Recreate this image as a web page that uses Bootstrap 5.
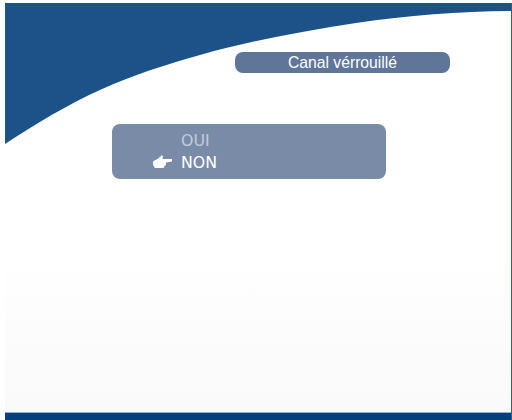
<!DOCTYPE html>
<html lang="fr">
<head>
<meta charset="utf-8">
<link href="https://cdn.jsdelivr.net/npm/bootstrap@5.3.0/dist/css/bootstrap.min.css" rel="stylesheet">
<style>
html, body { width: 512px; height: 420px; margin: 0; overflow: hidden; background: #fff; }
.tv-frame { width: 512px; height: 420px; padding: 3px 0 0 5px; }
.tv-screen { width: 507px; height: 417px; background: linear-gradient(#fff 60%, #f9f9f9 100%); border-right: 1px solid #2f5f8f; }
.tv-swoosh { left: 0; top: 0; width: 506px; height: 144px; }
.tv-body { flex: 1 1 auto; min-height: 0; }
.tv-bottom { height: 8px; background: #03407c; border-top: 1px solid #8fb0d0; }
.tv-title-row { padding: 49px 61px 0 230px; }
.tv-title { height: 21px; background: #5f7699; border-radius: 8px; color: #fff; font: 15.7px/21px "Liberation Sans", sans-serif; text-align: center; }
.tv-panel { width: 274px; height: 55px; margin: 51px 0 0 107px; background: #7a8ba8; border-radius: 8px; padding-top: 7px; font: 15.8px/20px "DejaVu Sans", sans-serif; }
.tv-line { height: 21px; }
.tv-pointer-col { width: 69px; padding-left: 41px; }
.tv-hand { margin-bottom: 2px; }
.tv-dim { color: #c3cbda; }
</style>
</head>
<body>
<div class="tv-frame">
  <div class="tv-screen position-relative d-flex flex-column">
    <svg class="tv-swoosh position-absolute" viewBox="0 0 506 144" aria-hidden="true">
      <path d="M0 0H506V8C455 8.5 403 12.2 351 20C299 28 247 37.4 195 52C162 61.2 128 72 95 87C63 101.4 32 120 0 141Z" fill="#1c5288"/>
    </svg>
    <div class="tv-body position-relative">
      <div class="tv-title-row"><div class="tv-title">Canal vérrouillé</div></div>
      <div class="tv-panel">
        <div class="tv-line d-flex"><span class="tv-pointer-col"></span><span class="tv-dim">OUI</span></div>
        <div class="tv-line d-flex align-items-center"><span class="tv-pointer-col d-flex align-items-center">
          <svg class="tv-hand" width="19" height="13" viewBox="0 0 19 13" aria-hidden="true"><path d="M0 7C1 5 4 5 7 2L9 0 10 2 9.5 4H19V6.5L13 7.5V10L11.5 11 10.5 13H3C1 13 -.5 9 0 7Z" fill="#fff"/></svg>
        </span><span class="text-white">NON</span></div>
      </div>
    </div>
    <div class="tv-bottom"></div>
  </div>
</div>
</body>
</html>
